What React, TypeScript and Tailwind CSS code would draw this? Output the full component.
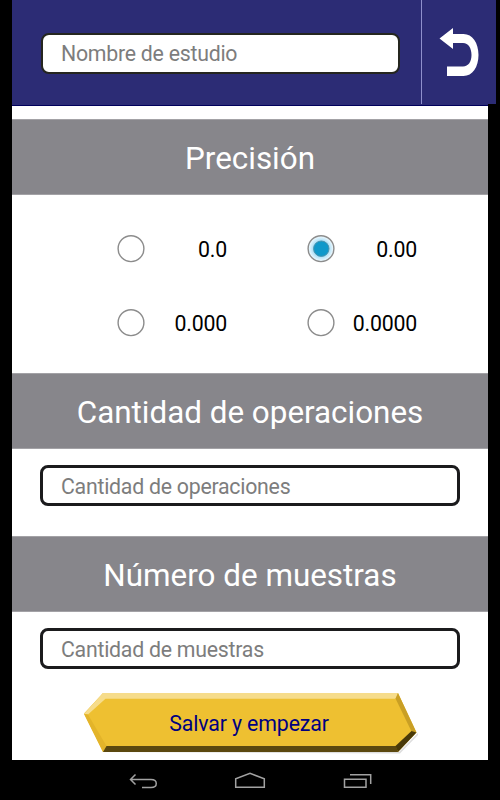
import { useState } from 'react'

const PRECISIONS = ['0.0', '0.00', '0.000', '0.0000']

function SectionTitle({ children }: { children: string }) {
  return (
    <h2 className="flex h-[76px] shrink-0 items-center justify-center border-y border-[#a3a2a6] bg-[#87868b] pt-[3px] text-[31.4px] text-white">
      <span className="whitespace-nowrap">{children}</span>
    </h2>
  )
}

function Field({ placeholder, className }: { placeholder: string; className: string }) {
  return (
    <input
      aria-label={placeholder}
      placeholder={placeholder}
      className={`rounded-[8px] bg-white text-[21.3px] tracking-[-0.25px] text-black outline-none placeholder:text-[#7d7d7d] ${className}`}
    />
  )
}

function Radio({ label, checked, onSelect }: { label: string; checked: boolean; onSelect: () => void }) {
  return (
    <label className="flex h-7 w-[110px] items-center justify-between">
      <input type="radio" name="precision" checked={checked} onChange={onSelect} className="sr-only" />
      <svg width="28" height="28" viewBox="0 0 28 28">
        <defs>
          <radialGradient id="halo">
            <stop offset="0.55" stopColor="#a0daf5" />
            <stop offset="1" stopColor="#f6fcff" />
          </radialGradient>
        </defs>
        <circle cx="14" cy="13.700" r="12.900" fill={checked ? 'url(#halo)' : '#fff'} stroke="#8c8c8c" strokeWidth="1.400" />
        {checked && <circle cx="14.300" cy="13.700" r="7.700" fill="#0f98ca" stroke="#4c94ad" strokeWidth="1" />}
      </svg>
      <span className="pt-px text-[21.3px] leading-7 tracking-[-0.2px] text-black">{label}</span>
    </label>
  )
}

export default function App() {
  const [precision, setPrecision] = useState('0.00')

  return (
    <div className="flex h-[800px] w-[500px] flex-col overflow-hidden bg-black font-[Roboto,sans-serif]">
      <div className="flex h-[760px] flex-col pl-3">
        {/* Header */}
        <header className="flex h-[106px] shrink-0">
          <div className="flex h-[106px] w-[409px] items-start border-b border-[#00005c] bg-[#2c2c75] pt-[33px] pl-[29px]">
            <Field
              placeholder="Nombre de estudio"
              className="h-[41px] w-[359px] border-2 border-[#25261f] pl-[18px]"
            />
          </div>
          <div className="h-[106px] w-[67px] border-b border-[#00005c] bg-[#2c2c75]">
            <button aria-label="Volver" className="block h-[104px] w-[75px] border-l border-[#8f90cc] bg-[#2c2c75]">
              <svg width="74" height="104" viewBox="422 0 74 104">
                <path
                  d="M439.500 38.500 453 28v6h10.500c9 0 15 9 15 21s-6 21-15 21H447v-9.500h16c5.500 0 8.500-5 8.500-11.500s-3-12-8.500-12H453v6z"
                  fill="#fff"
                />
              </svg>
            </button>
          </div>
        </header>

        <main className="flex w-[476px] flex-1 flex-col bg-white pt-[13px]">
          <SectionTitle>Precisión</SectionTitle>
          <div className="grid h-[178px] shrink-0 grid-cols-[190px_110px] content-start gap-y-[46px] pt-[40px] pl-[105px]">
            {PRECISIONS.map((p) => (
              <Radio key={p} label={p} checked={p === precision} onSelect={() => setPrecision(p)} />
            ))}
          </div>

          <SectionTitle>Cantidad de operaciones</SectionTitle>
          <div className="flex h-[87px] shrink-0 pt-[16px] pl-7">
            <Field
              placeholder="Cantidad de operaciones"
              className="h-[41px] w-[420px] border-3 border-[#1b1b1d] pt-0.5 pl-[18px]"
            />
          </div>

          <SectionTitle>Número de muestras</SectionTitle>
          <div className="flex h-[80px] shrink-0 pt-[16px] pl-7">
            <Field
              placeholder="Cantidad de muestras"
              className="h-[41px] w-[420px] border-3 border-[#1b1b1d] pt-0.5 pl-[18px]"
            />
          </div>

          <button className="ml-[72px] grid h-[62px] w-[334px] shrink-0 place-items-center">
            <svg width="334" height="62" viewBox="84 692 334 62" className="col-start-1 row-start-1">
              <path d="M400 753.500 418 735v-2l-19 19H103z" fill="#dedede" />
              <path d="M103 693h295l18.500 39.500L398 752H103L84 713.500z" fill="#eec031" />
              <path d="M84 714 103 693h295l-2 5.700H105.500L88 714.500z" fill="#f6dc8b" />
              <path d="M84 714l4 .5L106.500 746l-3.500 6z" fill="#e3b42a" />
              <path d="M398 693l18.500 39.500-5-1L395.500 698.500z" fill="#c99f25" />
              <path d="M103 752l3.500-6H396l2 6z" fill="#5b480f" />
              <path d="M398 752l-2.500-6 16-15 5 1.500z" fill="#493909" />
            </svg>
            <span className="col-start-1 row-start-1 pt-0.5 pr-1 text-[21.3px] leading-none tracking-[-0.12px] text-[#000080]">
              Salvar y empezar
            </span>
          </button>
        </main>
      </div>

      {/* Android navigation bar */}
      <nav className="flex h-10 items-center justify-center">
        <svg width="250" height="40" viewBox="125 760 250 40" fill="none" stroke="#a2a2a2" strokeWidth="1.500">
          <path d="M135.500 774.500l-5 5 5 5M130.500 779.500H151c7 0 7 8 0 8h-9" />
          <path d="M235.700 787.300v-8.500l14.300-5.500 14.300 5.500v8.500z" />
          <path d="M344.500 779.200h21.500v8.100h-21.500zM350 774.700h20.700v9.300" />
        </svg>
      </nav>
    </div>
  )
}
